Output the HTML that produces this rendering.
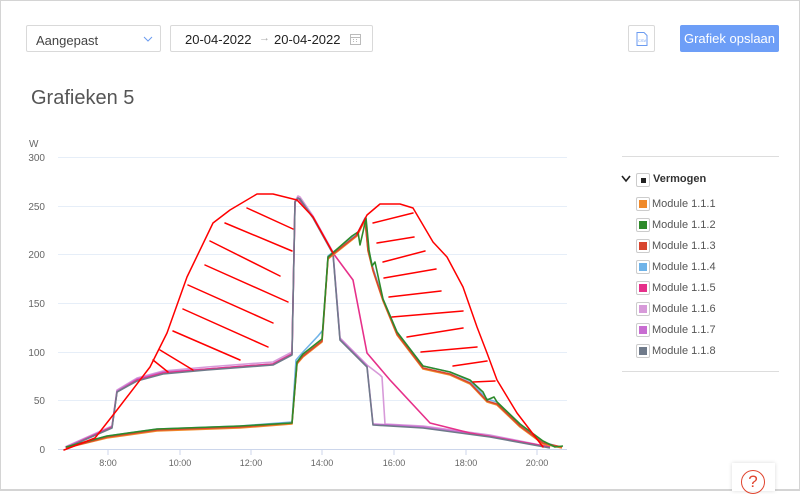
<!DOCTYPE html>
<html><head><meta charset="utf-8"><style>
*{margin:0;padding:0;box-sizing:border-box}
body{width:800px;height:491px;overflow:hidden;background:#fff;font-family:"Liberation Sans",sans-serif;position:relative}
.frame{position:absolute;left:0;top:0;width:800px;height:491px;border:1px solid #d4d4d4;border-bottom:2px solid #d4d4d4}
.box{position:absolute;border:1px solid #d9d9d9;border-radius:2px;background:#fff}
.leg{position:absolute;left:637px;font-size:11px;color:#555}
.sw{position:absolute;left:-1px;top:-1px;width:14px;height:14px;border:1px solid #ccc;border-radius:2px;background:#fff}
.sw i{position:absolute;left:2px;top:2px;width:8px;height:8px}
</style></head><body>
<div class="frame"></div>
<div class="box" style="left:26px;top:25px;width:135px;height:27px"><span style="position:absolute;left:9px;top:7px;font-size:13px;color:#444">Aangepast</span><svg style="position:absolute;left:116px;top:10px" width="10" height="7"><path d="M1 1L5 5L9 1" stroke="#6b9bf0" fill="none" stroke-width="1"/></svg></div>
<div class="box" style="left:170px;top:25px;width:203px;height:27px"><span style="position:absolute;left:14px;top:6px;font-size:13px;color:#222">20-04-2022</span><span style="position:absolute;left:88px;top:6px;font-size:11px;color:#aaa">→</span><span style="position:absolute;left:103px;top:6px;font-size:13px;color:#222">20-04-2022</span><svg style="position:absolute;left:179px;top:7px" width="11" height="12"><rect x="0.5" y="1.5" width="10" height="10" fill="none" stroke="#bbb"/><path d="M0.5 4.5H10.5M3 6.5h1M6 6.5h1M3 8.5h1M6 8.5h1" stroke="#bbb"/></svg></div>
<div class="box" style="left:628px;top:25px;width:27px;height:27px"><svg style="position:absolute;left:7px;top:6px" width="12" height="14"><path d="M1 .5H8L11 3.5V13.5H1Z" fill="none" stroke="#6b9bf0"/><text x="2" y="10" font-size="4" fill="#6b9bf0" font-family="Liberation Sans">CSV</text></svg></div>
<div style="position:absolute;left:680px;top:25px;width:99px;height:27px;background:#6d9ef7;border-radius:2px;color:#fff;font-size:13px;line-height:27px;text-align:center">Grafiek opslaan</div>
<div style="position:absolute;left:31px;top:87px;font-size:20px;color:#555">Grafieken 5</div>
<svg style="position:absolute;left:0;top:0" width="800" height="491" font-family="Liberation Sans">
<g stroke="#e6eef8" stroke-width="1">
<path d="M58 157.5H567M58 206.5H567M58 254.5H567M58 303.5H567M58 352.5H567M58 400.5H567"/></g>
<path d="M58 449.5H567" stroke="#ccd6eb"/>
<path d="M108 450v5M180 450v5M251 450v5M322 450v5M394 450v5M466 450v5M537 450v5" stroke="#ccd6eb"/>
<g font-size="10" fill="#666" text-anchor="end">
<text x="45" y="161">300</text><text x="45" y="210">250</text><text x="45" y="258">200</text><text x="45" y="307">150</text><text x="45" y="356">100</text><text x="45" y="404">50</text><text x="45" y="453">0</text></g>
<text x="29" y="147" font-size="10" fill="#666">W</text>
<g font-size="9" fill="#666" text-anchor="middle">
<text x="108" y="466">8:00</text><text x="180" y="466">10:00</text><text x="251" y="466">12:00</text><text x="322" y="466">14:00</text><text x="394" y="466">16:00</text><text x="466" y="466">18:00</text><text x="537" y="466">20:00</text></g>
<g fill="none" stroke-width="1.6" stroke-linejoin="round">
<path stroke="#d79ad9" d="M65 447L112 426L117 390L137 378L163 371L207 367L273 362L292 352L295 201L298 196L300 197L313 216L333 252L340 338L367 365L380 375L382 377L385 424L423 426L490 435L550 447"/>
<path stroke="#c86dd1" d="M66 447L112 427L117 391L137 379L163 372L207 369L273 364L292 354L295 202L298 198L313 217L333 253L340 339L367 366L373 424L423 427L490 436L550 447"/>
<path stroke="#e6308a" d="M66 448L112 427L117 392L137 380L163 373L207 369L273 364L292 354L295 202L298 198L313 217L333 253L353 280L367 353L390 380L430 423L470 433L550 447"/>
<path stroke="#6f7a8a" d="M66 448L112 428L117 392L137 381L163 374L207 370L273 365L292 355L295 202L298 198L300 199L313 218L333 254L340 340L367 367L373 425L423 428L490 437L550 448"/>
<path stroke="#6fb3e8" d="M66 448L107 436L157 429L240 426L292 422L296 360L303 352L318 336L323 330L328 256L357 234L365 218L368 248L373 268L383 299L397 332L423 366L450 372L470 381L487 399L497 402L520 424L543 442L560 447"/>
<path stroke="#f08a2a" d="M66 448L107 438L157 431L240 428L292 424L297 364L303 357L322 342L328 259L357 236L365 220L368 251L373 271L383 301L397 335L423 369L450 375L470 384L487 402L497 405L520 427L543 444L562 448"/>
<path stroke="#d8452f" d="M66 448L107 437L157 430L240 427L292 423L297 363L303 356L322 341L328 258L357 235L365 219L368 250L373 270L383 300L397 334L423 368L450 374L470 383L487 401L497 404L520 426L543 443L562 447"/>
<path stroke="#2e8a2a" d="M66 447L107 436L157 429L240 426L292 423L297 362L303 354L322 339L328 257L352 236L358 232L360 245L363 232L366 218L369 250L372 266L375 262L383 299L397 332L423 366L450 372L470 380L483 392L487 400L494 397L497 402L520 424L543 441L555 447L563 446"/>
</g>
<g fill="none" stroke="#f00" stroke-width="1.5" stroke-linecap="round" stroke-linejoin="round">
<path d="M64 450L95 438L117 410L150 367L167 333L187 277L213 223L230 210L257 194L273 194L297 200L313 217L333 253"/>
<path d="M357 234L367 215L380 204L400 204L413 208L433 242L447 257L463 287L477 327L487 353L497 380L517 413L543 447"/>
<path d="M247 208L293 229M225 223L292 251M210 241L280 276M205 265L288 302M188 285L273 323M183 309L268 347M173 331L240 360M160 350L193 370M153 360L168 372"/>
<path d="M373 223L413 213M377 243L414 237M383 262L425 251M384 278L436 269M389 297L441 291M392 317L463 311M407 337L463 328M421 352L477 347M453 366L487 361M473 382L495 381"/>
</g>
<path d="M622 156.5H779M622 371.5H779" stroke="#ddd"/>
<path d="M622 176L626 181L630 176" stroke="#222" stroke-width="1.6" fill="none"/>
</svg>
<div class="leg" style="top:174px"><div class="sw"><i style="left:4px;top:4px;width:5px;height:5px;background:#222"></i></div><span style="position:absolute;left:16px;top:-1px;font-weight:bold;color:#333;white-space:nowrap">Vermogen</span></div>
<div class="leg" style="top:198px"><div class="sw"><i style="background:#f08a2a"></i></div><span style="position:absolute;left:15px;top:0;white-space:nowrap">Module 1.1.1</span></div>
<div class="leg" style="top:219px"><div class="sw"><i style="background:#2e8a2a"></i></div><span style="position:absolute;left:15px;top:0;white-space:nowrap">Module 1.1.2</span></div>
<div class="leg" style="top:240px"><div class="sw"><i style="background:#d8452f"></i></div><span style="position:absolute;left:15px;top:0;white-space:nowrap">Module 1.1.3</span></div>
<div class="leg" style="top:261px"><div class="sw"><i style="background:#6fb3e8"></i></div><span style="position:absolute;left:15px;top:0;white-space:nowrap">Module 1.1.4</span></div>
<div class="leg" style="top:282px"><div class="sw"><i style="background:#e6308a"></i></div><span style="position:absolute;left:15px;top:0;white-space:nowrap">Module 1.1.5</span></div>
<div class="leg" style="top:303px"><div class="sw"><i style="background:#d79ad9"></i></div><span style="position:absolute;left:15px;top:0;white-space:nowrap">Module 1.1.6</span></div>
<div class="leg" style="top:324px"><div class="sw"><i style="background:#c86dd1"></i></div><span style="position:absolute;left:15px;top:0;white-space:nowrap">Module 1.1.7</span></div>
<div class="leg" style="top:345px"><div class="sw"><i style="background:#6f7a8a"></i></div><span style="position:absolute;left:15px;top:0;white-space:nowrap">Module 1.1.8</span></div>
<div style="position:absolute;left:732px;top:463px;width:43px;height:28px;background:#fff;box-shadow:0 0 4px rgba(0,0,0,.15)"><div style="position:absolute;left:9px;top:7px;width:24px;height:24px;border:1.5px solid #e0452f;border-radius:50%;color:#e0452f;font-size:17px;text-align:center;line-height:22px">?</div></div>
</body></html>
